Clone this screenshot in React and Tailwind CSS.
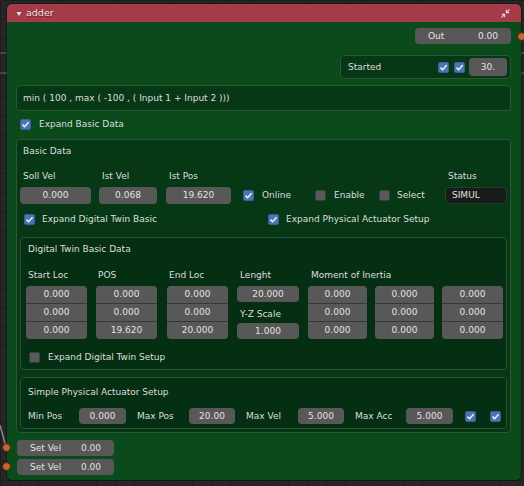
import React from 'react';

// Small checkbox in Blender style
function Check({ on }) {
  if (!on) {
    return <div className="w-[11px] h-[11px] shrink-0 rounded-[2px] bg-[#5a5a5a] border border-[#3e3e3e]" />;
  }
  return (
    <div className="w-[11px] h-[11px] shrink-0 rounded-[2px] bg-[#4a74b4] border border-[#3a5f96] flex items-center justify-center">
      <svg width="9" height="9" viewBox="0 0 9 9">
        <path d="M1.5 4.6 L3.6 6.7 L7.6 2.2" fill="none" stroke="#f2f2f2" strokeWidth="1.5" />
      </svg>
    </div>
  );
}

function Field({ children, className = '' }) {
  return (
    <div className={`h-[16px] shrink-0 rounded-[4px] bg-[#585858] text-[#e2e2e2] flex items-center justify-center ${className}`}>
      {children}
    </div>
  );
}

function Stack({ values, className = '' }) {
  return (
    <div className={`flex flex-col gap-px rounded-[4px] overflow-hidden bg-[#383838] shrink-0 ${className}`}>
      {values.map((v, i) => (
        <div key={i} className="h-[17px] bg-[#585858] flex items-center justify-center text-[#e2e2e2]">{v}</div>
      ))}
    </div>
  );
}

export default function App() {
  return (
    <div className="relative w-[524px] h-[486px] overflow-hidden bg-[#262626] bg-[linear-gradient(to_right,#1d1d1d_1px,transparent_1px),linear-gradient(to_bottom,#1d1d1d_1px,transparent_1px)] [background-size:19.2px_19.2px] pt-[4px] pl-[7px] font-['DejaVu_Sans',sans-serif] text-[9px] text-[#dedede] leading-none">
      {/* links behind the node */}
      <div className="absolute left-0 top-[52px] w-full h-[2px] bg-white/15" />
      <div className="absolute left-0 top-[72px] w-full h-[2px] bg-white/15" />
      <svg className="absolute left-0 top-[425px]" width="8" height="40" viewBox="0 0 8 40">
        <path d="M0 0 L6 22" stroke="#8a8a8a" strokeWidth="1.5" fill="none" />
      </svg>

      {/* node */}
      <div className="relative w-[514px] h-[476px] rounded-[5px] bg-[#0b4a1b] flex flex-col shadow-[0_0_0_1px_rgba(0,0,0,0.35)]">
        {/* header */}
        <div className="h-[18px] shrink-0 rounded-t-[5px] bg-[#a53a48] flex items-center pl-[9px] pr-[10px]">
          <svg width="6" height="6" viewBox="0 0 6 6" className="mt-[1px]">
            <path d="M0.5 1 L5.5 1 L3 5 Z" fill="#efe3e4" />
          </svg>
          <span className="ml-[4px] text-[#efe2e3] text-[9.5px] [text-shadow:0_1px_1px_rgba(0,0,0,0.4)]">adder</span>
          <svg className="ml-auto" width="11" height="11" viewBox="0 0 24 24" fill="none" stroke="#efd3d7" strokeWidth="2.4">
            <polyline points="4 14 10 14 10 20" />
            <polyline points="20 10 14 10 14 4" />
            <line x1="14" y1="10" x2="21" y2="3" />
            <line x1="3" y1="21" x2="10" y2="14" />
          </svg>
        </div>

        {/* body */}
        <div className="flex flex-col pl-[9px] pr-[10px] pt-[6px]">
          {/* Out socket */}
          <div className="relative flex justify-end">
            <div className="relative h-[16px] w-[96px] rounded-[4px] bg-[#575757] flex items-center justify-between px-[13px] text-[#e2e2e2]">
              <span>Out</span>
              <span>0.00</span>
            </div>
          </div>

          {/* Started panel */}
          <div className="relative mt-[11px] flex justify-end">
            <div className="h-[24px] w-[171px] rounded-[4px] bg-[#073816] border border-[#2c5634] flex items-center pl-[7px] pr-[3px]">
              <span>Started</span>
              <div className="ml-auto flex items-center">
                <Check on />
                <div className="ml-[5px]"><Check on /></div>
                <div className="ml-[4px] h-[18px] w-[38px] rounded-[4px] bg-[#585858] flex items-center justify-center text-[#e2e2e2]">30.</div>
              </div>
            </div>
          </div>

          {/* expression */}
          <div className="relative mt-[6px] h-[26px] rounded-[4px] bg-[#073816] border border-[#2c5634] flex items-center pl-[6px]">
            min ( 100 , max ( -100 , ( Input 1 + Input 2 )))
          </div>

          {/* expand basic data */}
          <div className="mt-[3px] h-[20px] flex items-center pl-[4px]">
            <Check on />
            <span className="ml-[8px]">Expand Basic Data</span>
          </div>

          {/* Basic Data panel */}
          <div className="relative mt-[5px] h-[294px] rounded-[4px] bg-[#073816] border border-[#2c5634] flex flex-col">
            <div className="h-[22px] flex items-center pl-[6px]">Basic Data</div>

            <div className="h-[25px] pt-[4px] flex items-center pl-[3px]">
              <div className="w-[79px] pl-[3px]">Soll Vel</div>
              <div className="w-[67px] pl-[3px]">Ist Vel</div>
              <div className="w-[279px] pl-[3px]">Ist Pos</div>
              <div className="pl-[3px]">Status</div>
            </div>

            <div className="h-[17px] flex items-center pl-[3px]">
              <Field className="w-[71px] h-[17px]">0.000</Field>
              <Field className="ml-[8px] w-[58px] h-[17px]">0.068</Field>
              <Field className="ml-[9px] w-[65px] h-[17px]">19.620</Field>
              <div className="ml-[12px] w-[72px] flex items-center">
                <Check on />
                <span className="ml-[8px]">Online</span>
              </div>
              <div className="w-[64px] flex items-center">
                <Check />
                <span className="ml-[8px]">Enable</span>
              </div>
              <div className="w-[66px] flex items-center">
                <Check />
                <span className="ml-[7px]">Select</span>
              </div>
              <div className="w-[62px] h-[17px] rounded-[4px] bg-[#181c18] border border-[#2a3a2c] flex items-center pl-[6px] text-[#e2e2e2]">SIMUL</div>
            </div>

            <div className="mt-[5px] h-[20px] flex items-center pl-[7px]">
              <div className="w-[244px] flex items-center">
                <Check on />
                <span className="ml-[7px]">Expand Digital Twin Basic</span>
              </div>
              <Check on />
              <span className="ml-[7px]">Expand Physical Actuator Setup</span>
            </div>

            {/* Digital Twin Basic Data */}
            <div className="mt-[8px] mx-[3px] h-[133px] rounded-[4px] bg-[#052f12] border border-[#2a5232] flex flex-col">
              <div className="h-[23px] flex items-center pl-[7px]">Digital Twin Basic Data</div>
              <div className="h-[25px] pt-[4px] flex items-center pl-[5px]">
                <div className="w-[61px] pl-[2px]">Start Loc</div>
                <div className="ml-[9px] w-[61px] pl-[2px]">POS</div>
                <div className="ml-[10px] w-[61px] pl-[2px]">End Loc</div>
                <div className="ml-[9px] w-[62px] pl-[3px]">Lenght</div>
                <div className="ml-[9px] pl-[3px] whitespace-nowrap">Moment of Inertia</div>
              </div>
              <div className="h-[53px] flex pl-[5px]">
                <Stack className="w-[61px]" values={['0.000', '0.000', '0.000']} />
                <Stack className="ml-[9px] w-[61px]" values={['0.000', '0.000', '19.620']} />
                <Stack className="ml-[10px] w-[61px]" values={['0.000', '0.000', '20.000']} />
                <div className="ml-[9px] w-[62px] flex flex-col">
                  <Field className="w-[62px]">20.000</Field>
                  <div className="h-[23px] pt-[3px] flex items-center pl-[3px]">Y-Z Scale</div>
                  <Field className="w-[62px]">1.000</Field>
                </div>
                <Stack className="ml-[9px] w-[59px]" values={['0.000', '0.000', '0.000']} />
                <Stack className="ml-[8px] w-[59px]" values={['0.000', '0.000', '0.000']} />
                <Stack className="ml-[8px] w-[61px]" values={['0.000', '0.000', '0.000']} />
              </div>
              <div className="mt-[8px] h-[20px] flex items-center pl-[8px]">
                <Check />
                <span className="ml-[8px]">Expand Digital Twin Setup</span>
              </div>
            </div>

            {/* Simple Physical Actuator Setup */}
            <div className="mt-[7px] mx-[3px] h-[52px] rounded-[4px] bg-[#052f12] border border-[#2a5232] flex flex-col">
              <div className="h-[27px] pt-[1px] flex items-center pl-[7px]">Simple Physical Actuator Setup</div>
              <div className="mt-[3px] h-[16px] flex items-center pl-[7px]">
                <div className="w-[51px]">Min Pos</div>
                <Field className="w-[47px]">0.000</Field>
                <div className="w-[63px] pl-[11px]">Max Pos</div>
                <Field className="w-[46px]">20.00</Field>
                <div className="w-[63px] pl-[11px]">Max Vel</div>
                <Field className="w-[46px]">5.000</Field>
                <div className="w-[62px] pl-[11px]">Max Acc</div>
                <Field className="w-[47px]">5.000</Field>
                <div className="ml-[12px]"><Check on /></div>
                <div className="ml-[14px]"><Check on /></div>
              </div>
            </div>
          </div>

          {/* Set Vel inputs */}
          <div className="mt-[7px] ml-[1px] h-[16px] w-[97px] rounded-[4px] bg-[#575757] flex items-center justify-between px-[13px] text-[#e2e2e2]">
            <span>Set Vel</span>
            <span>0.00</span>
          </div>
          <div className="mt-[3px] ml-[1px] h-[16px] w-[97px] rounded-[4px] bg-[#575757] flex items-center justify-between px-[13px] text-[#e2e2e2]">
            <span>Set Vel</span>
            <span>0.00</span>
          </div>
        </div>

        {/* sockets */}
        <div className="absolute right-[-5px] top-[28px] w-[9px] h-[9px] rounded-full bg-[#c4672f] border border-[#3a2010]" />
        <div className="absolute left-[-5px] top-[439px] w-[9px] h-[9px] rounded-full bg-[#c4672f] border border-[#3a2010]" />
        <div className="absolute left-[-5px] top-[458px] w-[9px] h-[9px] rounded-full bg-[#c4672f] border border-[#3a2010]" />
      </div>
    </div>
  );
}
